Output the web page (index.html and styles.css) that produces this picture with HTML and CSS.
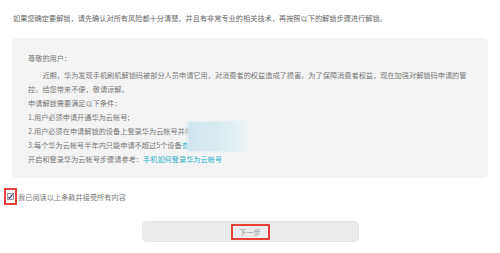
FILE: index.html
```html
<!DOCTYPE html>
<html lang="zh-CN">
<head>
    <meta charset="UTF-8">
    <title>解锁须知</title>
    <link rel="stylesheet" href="styles.css">
</head>
<body>
    <div class="page">
        <p class="intro">如果您确定要解锁，请先确认对所有风险都十分清楚，并且有非常专业的相关技术，再按照以下的解锁步骤进行解锁。</p>

        <div class="notice">
            <p class="greet">尊敬的用户：</p>
            <p class="para">近期，华为发现手机刷机解锁码被部分人员申请它用，对消费者的权益造成了损害。为了保障消费者权益，现在加强对解锁码申请的管控。给您带来不便，敬请谅解。</p>
            <p>申请解锁需要满足以下条件：</p>
            <p>1.用户必须申请开通华为云帐号;</p>
            <p>2.用户必须在申请解锁的设备上登录华为云帐号并绑定</p>
            <p>3.每个华为云帐号半年内只能申请不超过5个设备<a class="link" href="#">查看</a></p>
            <p>开启和登录华为云帐号步骤请参考：<a class="link" href="#">手机如何登录华为云帐号</a></p>
            <div class="mask"></div>
        </div>

        <div class="agree">
            <span class="mark">
                <span class="box">
                    <svg width="7" height="7" viewBox="0 0 7 7">
                        <path d="M1.5 4 L2.6 5.3 L5.6 1.4" fill="none" stroke="#2b3f8c" stroke-width="1.1"/>
                    </svg>
                </span>
            </span>
            <span class="agree-text">我已阅读以上条款并接受所有内容</span>
        </div>

        <div class="actions">
            <button class="next"><span class="mark">下一步</span></button>
        </div>
    </div>
</body>
</html>
```

FILE: styles.css
```css
/* Global */
* {
    box-sizing: border-box;
    margin: 0;
    padding: 0;
}

body {
    background-color: #fff;
    font-family: "Noto Sans CJK SC", "Liberation Sans", sans-serif;
    font-size: 7.2px;
    color: #777;
    width: 500px;
    height: 253px;
    overflow: hidden;
}

.page {
    padding: 0 12px;
}

/* Intro line */
.intro {
    margin: 11px 0 13px 1px;
    line-height: 14px;
    color: #666;
}

/* Notice box */
.notice {
    position: relative;
    background-color: #f4f4f4;
    border-radius: 5px;
    padding: 13px 18px 12px 16px;
}

.notice p {
    line-height: 14px;
}

.notice .greet {
    margin-bottom: 3px;
}

.notice .para {
    text-indent: 2em;
}

.link {
    color: #27b3c6;
    text-decoration: none;
}

/* blurred part of the screenshot */
.mask {
    position: absolute;
    left: 177px;
    top: 84px;
    width: 58px;
    height: 29px;
    background: linear-gradient(to right, #cfe5ed, #d9ebf0 50%, #ecf4f6);
    box-shadow: -2px 0 3px #d6e9ef;
}

/* Agreement */
.agree {
    display: flex;
    align-items: center;
    margin: 10px 0 0 -8px;
    height: 17px;
}

.mark {
    display: inline-flex;
    align-items: center;
    justify-content: center;
    border: 2px solid #e8403a;
}

.agree .mark {
    width: 13px;
    height: 17px;
}

.box {
    display: block;
    width: 7px;
    height: 7px;
    border: 1px solid #9a9a9a;
    background-color: #f2f2f2;
    position: relative;
}

.box svg {
    position: absolute;
    left: -1px;
    top: -1px;
}

.agree-text {
    margin-left: 1px;
    color: #777;
}

/* Next button */
.actions {
    display: flex;
    justify-content: center;
    margin-top: 16px;
}

.next {
    width: 217px;
    height: 21px;
    display: flex;
    align-items: center;
    justify-content: center;
    background-color: #ececec;
    border: 1px solid #e4e4e4;
    border-radius: 5px;
    font-family: inherit;
    font-size: 7.2px;
    color: #999;
}

.next .mark {
    width: 39px;
    height: 16px;
    background-color: #ededed;
}
```
